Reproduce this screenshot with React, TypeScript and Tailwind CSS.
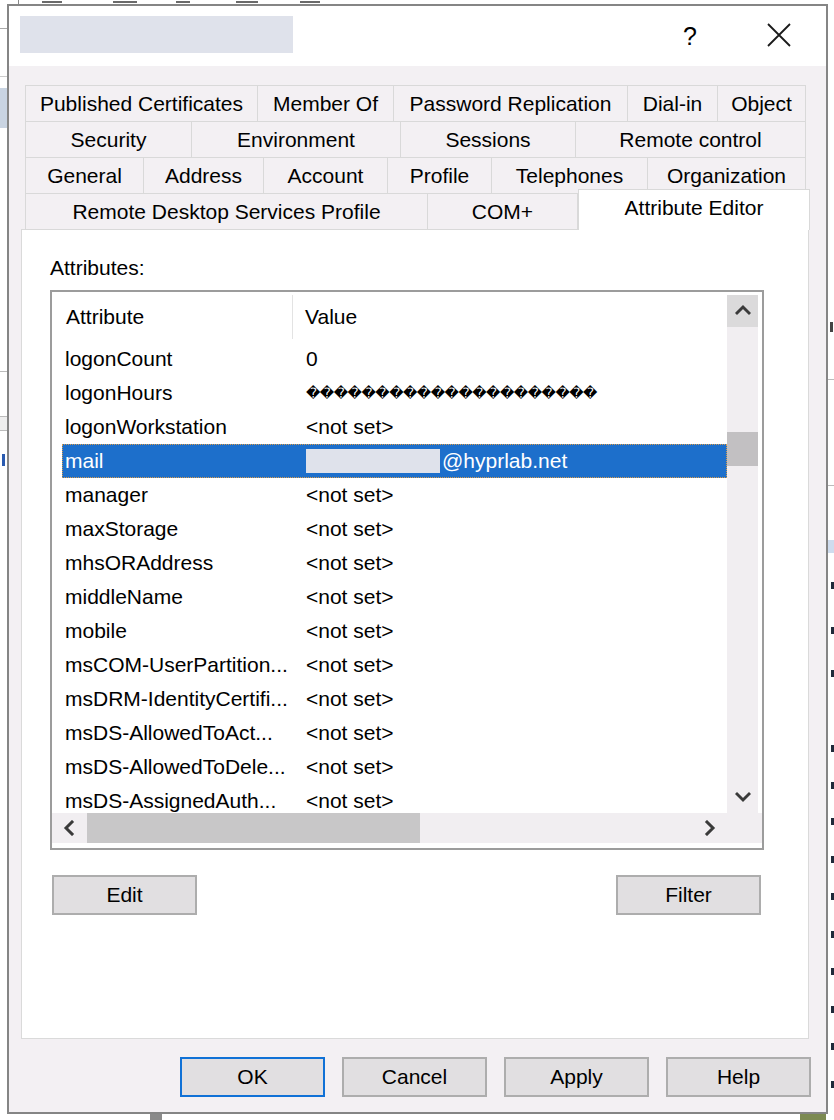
import React from "react";

type Tab = { label: string; w: string };

const row1: Tab[] = [
  { label: "Published Certificates", w: "w-[232px]" },
  { label: "Member Of", w: "w-[136px]" },
  { label: "Password Replication", w: "w-[234px]" },
  { label: "Dial-in", w: "w-[90px]" },
  { label: "Object", w: "w-[88px]" },
];
const row2: Tab[] = [
  { label: "Security", w: "w-[166px]" },
  { label: "Environment", w: "w-[209px]" },
  { label: "Sessions", w: "w-[175px]" },
  { label: "Remote control", w: "w-[230px]" },
];
const row3: Tab[] = [
  { label: "General", w: "w-[118px]" },
  { label: "Address", w: "w-[120px]" },
  { label: "Account", w: "w-[124px]" },
  { label: "Profile", w: "w-[104px]" },
  { label: "Telephones", w: "w-[156px]" },
  { label: "Organization", w: "w-[158px]" },
];
const row4: Tab[] = [
  { label: "Remote Desktop Services Profile", w: "w-[402px]" },
  { label: "COM+", w: "w-[150px]" },
];

const NOT_SET = "<not set>";
const DIAMONDS = "\uFFFD".repeat(21);

const attrs: [string, string][] = [
  ["logonCount", "0"],
  ["logonHours", DIAMONDS],
  ["logonWorkstation", NOT_SET],
  ["mail", "@hyprlab.net"],
  ["manager", NOT_SET],
  ["maxStorage", NOT_SET],
  ["mhsORAddress", NOT_SET],
  ["middleName", NOT_SET],
  ["mobile", NOT_SET],
  ["msCOM-UserPartition...", NOT_SET],
  ["msDRM-IdentityCertifi...", NOT_SET],
  ["msDS-AllowedToAct...", NOT_SET],
  ["msDS-AllowedToDele...", NOT_SET],
  ["msDS-AssignedAuth...", NOT_SET],
];

function TabRow({ tabs }: { tabs: Tab[] }) {
  return (
    <div className="-mt-px flex border-l border-[#d9d9d9] first:mt-0">
      {tabs.map((t) => (
        <div
          key={t.label}
          className={`${t.w} flex h-[37px] items-center justify-center border-y border-r border-[#d9d9d9] bg-[#f3f0f3]`}
        >
          {t.label}
        </div>
      ))}
    </div>
  );
}

function Chevron({ dir }: { dir: "up" | "down" | "left" | "right" }) {
  const points = {
    up: "2,10 8,4 14,10",
    down: "2,5 8,11 14,5",
    left: "10,2 4,8 10,14",
    right: "5,2 11,8 5,14",
  }[dir];
  return (
    <svg width="16" height="16" viewBox="0 0 16 16">
      <polyline
        points={points}
        fill="none"
        stroke="#3a3a3a"
        strokeWidth="3"
        strokeLinecap="square"
      />
    </svg>
  );
}

function Button({ label, w = "w-[145px]", primary = false }: { label: string; w?: string; primary?: boolean }) {
  return (
    <div
      className={`${w} flex h-[40px] items-center justify-center border-2 bg-[#e1dfe1] ${
        primary ? "border-[#1071d6]" : "border-[#adadad]"
      }`}
    >
      {label}
    </div>
  );
}

export default function App() {
  return (
    <div className="relative h-[1120px] w-[834px] overflow-hidden bg-white font-['Liberation_Sans',Arial,sans-serif] text-[21px] leading-[24px] text-black">
      {/* desktop behind the dialog: only slivers show */}
      {[
        "left-[42px] w-[20px]",
        "left-[113px] w-[24px]",
        "left-[176px] w-[14px]",
        "left-[236px] w-[22px]",
        "left-[300px] w-[20px]",
      ].map((c) => (
        <div key={c} className={`absolute top-[1px] h-[2px] bg-[#6a6a6a] ${c}`} />
      ))}
      <div className="absolute left-[18px] top-0 h-[4px] w-px bg-[#888]" />
      <div className="absolute left-0 top-[28px] h-px w-[7px] bg-[#aaa]" />
      <div className="absolute left-0 top-[76px] h-px w-[7px] bg-[#ccc]" />
      <div className="absolute left-0 top-[88px] h-[40px] w-[7px] bg-[#c9d4e2]" />
      <div className="absolute left-0 top-[371px] h-px w-[7px] bg-[#bbb]" />
      <div className="absolute left-0 top-[416px] h-[15px] w-[7px] border-y border-[#bbb] bg-[#eee]" />
      <div className="absolute left-[2px] top-[454px] h-[12px] w-[3px] bg-[#2a5bb0]" />
      <div className="absolute left-[830px] top-[322px] h-[10px] w-[3px] bg-[#444]" />
      <div className="absolute left-[828px] top-[379px] h-px w-[6px] bg-[#bbb]" />
      <div className="absolute left-[828px] top-[485px] h-px w-[6px] bg-[#bbb]" />
      <div className="absolute left-[828px] top-[540px] h-[13px] w-[6px] bg-[#cfdcee]" />
      {[582, 627, 670, 745, 782, 818, 856, 893, 931, 968, 1006, 1043, 1081].map((y) => (
        <div key={y} className="absolute left-[831px] h-[7px] w-[3px] bg-[#1f2a3a]" style={{ top: y }} />
      ))}
      <div className="absolute left-[150px] top-[1113px] h-[7px] w-[12px] bg-[#8a8a8a]" />
      <div className="absolute left-[800px] top-[1112px] h-[8px] w-[26px] bg-[#7c8a52]" />

      {/* dialog window */}
      <div className="absolute left-[7px] top-[4px] flex h-[1110px] w-[821px] flex-col border-2 border-[#858585] bg-[#f3f0f3]">
        {/* title bar */}
        <div className="flex h-[60px] items-start bg-white">
          <div className="ml-[11px] mt-[10px] h-[37px] w-[273px] bg-[#dfe2eb]" />
          <div className="flex-1" />
          <div className="mt-[15px] flex w-[30px] justify-center text-[25px] leading-[30px]">?</div>
          <div className="ml-[62px] mr-[35px] mt-[17px]">
            <svg width="24" height="24" viewBox="0 0 24 24">
              <path d="M1 1 L23 23 M23 1 L1 23" stroke="#1a1a1a" strokeWidth="1.8" />
            </svg>
          </div>
        </div>

        {/* tabs */}
        <div className="relative z-10 ml-[16px] mt-[19px] flex flex-col">
          <TabRow tabs={row1} />
          <TabRow tabs={row2} />
          <TabRow tabs={row3} />
          <div className="-mt-px flex items-start border-l border-[#d9d9d9]">
            {row4.map((t) => (
              <div
                key={t.label}
                className={`${t.w} flex h-[37px] items-center justify-center border-y border-r border-[#d9d9d9] bg-[#f3f0f3]`}
              >
                {t.label}
              </div>
            ))}
            <div className="-mt-[4px] flex h-[41px] w-[232px] items-center justify-center border-x border-t border-[#d9d9d9] bg-white pb-[4px]">
              Attribute Editor
            </div>
          </div>
        </div>

        {/* tab panel */}
        <div className="-mt-px ml-[12px] flex h-[810px] w-[788px] flex-col border border-[#dadada] bg-white pl-[28px] pt-[26px]">
          <div>Attributes:</div>

          <div className="mt-[10px] flex h-[560px] w-[714px] flex-col border-2 border-[#9c9c9c] bg-white">
            <div className="flex h-[521px]">
              {/* list content */}
              <div className="w-[675px] overflow-hidden pl-[10px]">
                <div className="flex h-[50px] items-center">
                  <div className="flex h-[44px] w-[231px] items-center border-r border-[#e3e3e3] pl-[4px]">Attribute</div>
                  <div className="pl-[12px]">Value</div>
                </div>
                {attrs.map(([name, value]) => {
                  const selected = name === "mail";
                  return (
                    <div
                      key={name}
                      className={`flex h-[34px] items-center whitespace-nowrap ${
                        selected
                          ? "bg-[#1d6fcb] text-white outline-1 -outline-offset-1 outline-dotted outline-[#d89b4c]"
                          : ""
                      }`}
                    >
                      <div className="w-[244px] pl-[3px]">{name}</div>
                      {selected ? (
                        <div className="flex items-center">
                          <div className="h-[24px] w-[134px] bg-[#dfe2eb]" />
                          <div className="pl-[2px]">{value}</div>
                        </div>
                      ) : value === DIAMONDS ? (
                        <div className="font-['DejaVu_Sans',sans-serif] text-[14px] tracking-[-0.5px]">{value}</div>
                      ) : (
                        <div>{value}</div>
                      )}
                    </div>
                  );
                })}
              </div>
              {/* vertical scrollbar */}
              <div className="w-[35px] pr-[4px] pt-[3px]">
                <div className="flex h-full flex-col bg-[#f1eef1]">
                  <div className="flex h-[32px] items-center justify-center bg-[#dbdadb]">
                    <Chevron dir="up" />
                  </div>
                  <div className="h-[105px]" />
                  <div className="h-[34px] bg-[#c2c0c2]" />
                  <div className="flex-1" />
                  <div className="flex h-[32px] items-center justify-center">
                    <Chevron dir="down" />
                  </div>
                </div>
              </div>
            </div>
            {/* horizontal scrollbar */}
            <div className="pb-[5px]">
              <div className="flex h-[30px] bg-[#f1eef1]">
                <div className="flex w-[35px] items-center justify-center">
                  <Chevron dir="left" />
                </div>
                <div className="w-[333px] bg-[#c8c7c8]" />
                <div className="flex-1" />
                <div className="flex w-[34px] items-center justify-center">
                  <Chevron dir="right" />
                </div>
                <div className="w-[35px]" />
              </div>
            </div>
          </div>

          <div className="mt-[25px] flex w-[714px] justify-between pl-[2px] pr-[3px]">
            <Button label="Edit" />
            <Button label="Filter" />
          </div>
        </div>

        {/* dialog buttons */}
        <div className="mr-[15px] mt-[18px] flex justify-end gap-[17px]">
          <Button label="OK" primary />
          <Button label="Cancel" />
          <Button label="Apply" />
          <Button label="Help" />
        </div>
      </div>
    </div>
  );
}
